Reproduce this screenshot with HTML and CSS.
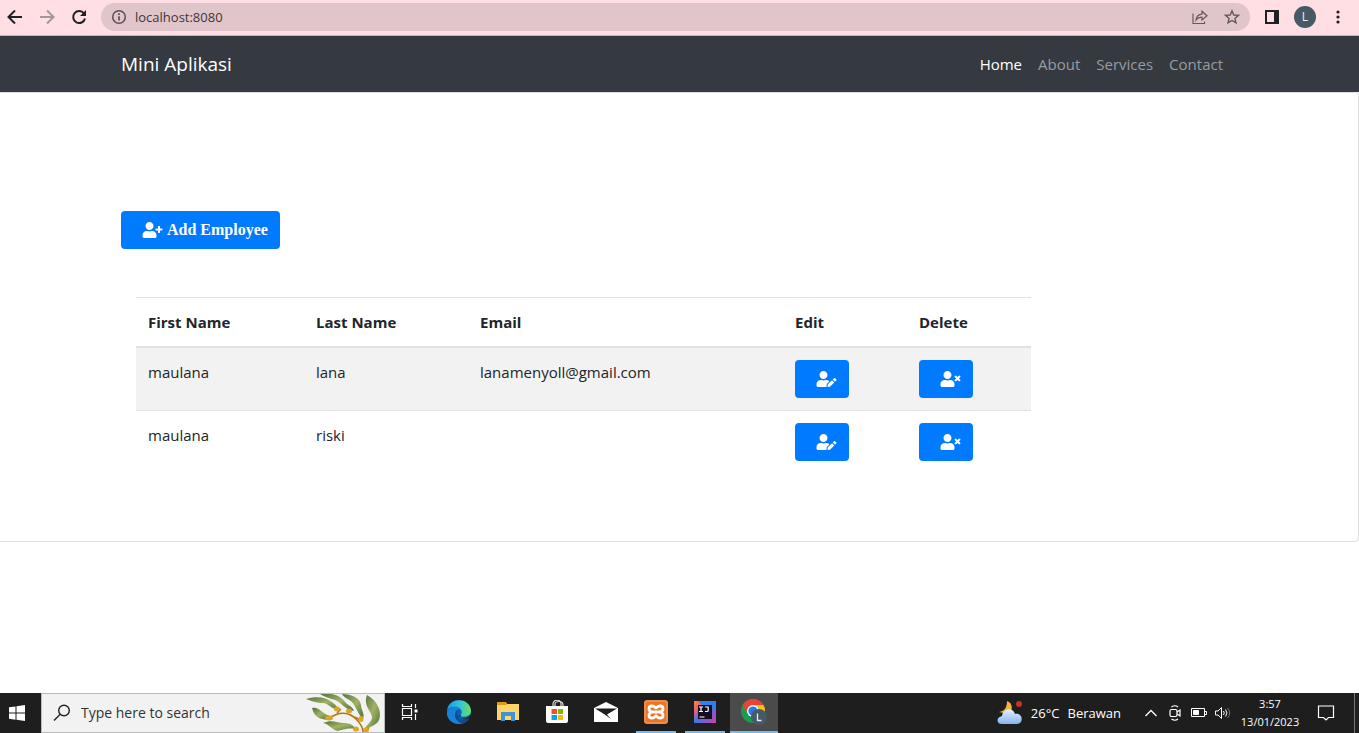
FILE: index.html
```html
<!DOCTYPE html>
<html lang="en">
<head>
<meta charset="utf-8">
<title>Mini Aplikasi</title>
<link rel="stylesheet" href="styles.css">
</head>
<body>
<svg class="defs" aria-hidden="true">
  <symbol id="user-plus" viewBox="0 0 640 512"><path d="M624 208h-64v-64c0-8.800-7.200-16-16-16h-32c-8.800 0-16 7.200-16 16v64h-64c-8.800 0-16 7.200-16 16v32c0 8.800 7.200 16 16 16h64v64c0 8.800 7.200 16 16 16h32c8.800 0 16-7.200 16-16v-64h64c8.800 0 16-7.200 16-16v-32c0-8.800-7.200-16-16-16zM224 256c70.700 0 128-57.300 128-128S294.700 0 224 0 96 57.300 96 128s57.300 128 128 128zm89.600 32h-16.700c-22.200 10.200-46.900 16-72.900 16s-50.600-5.800-72.900-16h-16.700C60.200 288 0 348.200 0 422.400V464c0 26.500 21.500 48 48 48h352c26.500 0 48-21.500 48-48v-41.600c0-74.200-60.200-134.400-134.400-134.400z"/></symbol>
  <symbol id="user-edit" viewBox="0 0 640 512"><path d="M224 256c70.700 0 128-57.300 128-128S294.700 0 224 0 96 57.300 96 128s57.300 128 128 128zm89.600 32h-16.700c-22.200 10.200-46.900 16-72.900 16s-50.600-5.800-72.900-16h-16.700C60.200 288 0 348.200 0 422.400V464c0 26.500 21.500 48 48 48h274.900c-2.400-6.800-3.400-14-2.600-21.300l6.800-60.900 1.200-11.100 7.900-7.900 77.300-77.300c-24.500-27.700-60-45.500-99.900-45.500zm45.300 145.300l-6.800 61c-1.100 10.200 7.500 18.800 17.600 17.600l60.900-6.800 137.900-137.900-71.700-71.700-137.900 137.800zM633 268.900L595.100 231c-9.300-9.300-24.500-9.300-33.800 0l-37.800 37.800-4.100 4.100 71.800 71.700 41.800-41.800c9.300-9.400 9.300-24.500 0-33.900z"/></symbol>
  <symbol id="user-times" viewBox="0 0 640 512"><path d="M589.600 240l45.600-45.600c6.300-6.300 6.300-16.500 0-22.800l-22.800-22.800c-6.300-6.300-16.500-6.300-22.800 0L544 194.400l-45.600-45.600c-6.300-6.300-16.500-6.300-22.800 0l-22.800 22.800c-6.300 6.300-6.300 16.500 0 22.800l45.600 45.600-45.600 45.600c-6.300 6.300-6.300 16.500 0 22.800l22.800 22.800c6.300 6.300 16.500 6.300 22.800 0l45.600-45.600 45.600 45.600c6.300 6.300 16.500 6.300 22.800 0l22.800-22.800c6.300-6.300 6.300-16.500 0-22.800zM224 256c70.700 0 128-57.300 128-128S294.700 0 224 0 96 57.300 96 128s57.300 128 128 128zm89.600 32h-16.700c-22.200 10.200-46.900 16-72.900 16s-50.600-5.800-72.900-16h-16.700C60.200 288 0 348.200 0 422.400V464c0 26.500 21.500 48 48 48h352c26.500 0 48-21.500 48-48v-41.600c0-74.200-60.200-134.400-134.400-134.400z"/></symbol>
  <linearGradient id="leaf" x1="0" y1="0" x2="1" y2="1"><stop offset="0" stop-color="#4f7340"/><stop offset=".5" stop-color="#a3b263"/><stop offset="1" stop-color="#4c7039"/></linearGradient>
  <linearGradient id="edge-top" x1="0" y1="0" x2="1" y2="0"><stop offset="0" stop-color="#1b9de2"/><stop offset=".5" stop-color="#2fc2df"/><stop offset="1" stop-color="#6be05a"/></linearGradient>
  <linearGradient id="cloud" x1="0" y1="0" x2="0" y2="1"><stop offset="0" stop-color="#e4f0ff"/><stop offset="1" stop-color="#86b4ef"/></linearGradient>
  <linearGradient id="idea" x1="0" y1="0" x2="1" y2="1"><stop offset="0" stop-color="#f88a3c"/><stop offset=".25" stop-color="#e8607a"/><stop offset=".5" stop-color="#3a76e8"/><stop offset="1" stop-color="#d93aa8"/></linearGradient>
</svg>

<header class="browser">
  <button class="tool" aria-label="Back"><svg width="16" height="16" viewBox="0 0 16 16" fill="none" stroke="#202124" stroke-width="2"><path d="M15 8H2M8 1.500L1.500 8 8 14.500"/></svg></button>
  <button class="tool" aria-label="Forward"><svg width="16" height="16" viewBox="0 0 16 16" fill="none" stroke="#a4969c" stroke-width="2"><path d="M1 8h13M8 1.500L14.500 8 8 14.500"/></svg></button>
  <button class="tool" aria-label="Reload"><svg width="16" height="16" viewBox="0 0 16 16"><path d="M13 4.500A6 6 0 1 0 14 9.500" fill="none" stroke="#202124" stroke-width="2"/><path d="M15 1v6H9z" fill="#202124"/></svg></button>
  <div class="address">
    <svg width="16" height="16" viewBox="0 0 16 16" fill="none" stroke="#5b5055"><circle cx="8" cy="8" r="6.300" stroke-width="1.500"/><path d="M8 7.300v4.200M8 4.300v1.700" stroke-width="1.700"/></svg>
    <input class="url" type="text" aria-label="Address" value="localhost:8080">
    <button class="tool" aria-label="Share"><svg width="16" height="16" viewBox="0 0 16 16" fill="none" stroke="#65595e" stroke-width="1.200"><path d="M1 4.500V14.500H12.500V12.500M4 11C4.500 7 7 5.300 10 5.200V2.200L15 6.800 10 11V8.200C7.500 8 5.500 9 4 11z"/></svg></button>
    <button class="tool" aria-label="Bookmark"><svg width="16" height="16" viewBox="0 0 16 16" fill="none" stroke="#65595e" stroke-width="1.400"><path d="M8 1.800l1.800 4.200 4.600.4-3.500 3 1.100 4.500L8 11.500l-4 2.400 1.100-4.500-3.500-3L6.200 6z"/></svg></button>
  </div>
  <button class="tool" aria-label="Side panel"><svg width="16" height="16" viewBox="0 0 16 16"><path d="M1 1h14v14H1zM3 3v10h7V3z" fill="#202124" fill-rule="evenodd"/></svg></button>
  <button class="avatar" aria-label="Profile">L</button>
  <button class="tool" aria-label="Menu"><svg width="16" height="16" viewBox="0 0 16 16" fill="#202124"><circle cx="8" cy="3" r="1.600"/><circle cx="8" cy="8" r="1.600"/><circle cx="8" cy="13" r="1.600"/></svg></button>
</header>

<nav class="navbar">
  <a class="brand" href="#">Mini Aplikasi</a>
  <a class="nav-link active" href="#">Home</a>
  <a class="nav-link" href="#">About</a>
  <a class="nav-link" href="#">Services</a>
  <a class="nav-link" href="#">Contact</a>
</nav>

<main class="page">
  <section class="card">
    <button class="btn"><svg class="user"><use href="#user-plus"/></svg><span class="btn-label">Add Employee</span></button>
    <table class="employees">
      <colgroup><col class="c-first"><col class="c-last"><col class="c-email"><col class="c-action"><col class="c-action"></colgroup>
      <thead><tr><th>First Name</th><th>Last Name</th><th>Email</th><th>Edit</th><th>Delete</th></tr></thead>
      <tbody>
        <tr><td>maulana</td><td>lana</td><td>lanamenyoll@gmail.com</td><td><button class="btn" aria-label="Edit"><svg class="user"><use href="#user-edit"/></svg></button></td><td><button class="btn" aria-label="Delete"><svg class="user"><use href="#user-times"/></svg></button></td></tr>
        <tr><td>maulana</td><td>riski</td><td></td><td><button class="btn" aria-label="Edit"><svg class="user"><use href="#user-edit"/></svg></button></td><td><button class="btn" aria-label="Delete"><svg class="user"><use href="#user-times"/></svg></button></td></tr>
      </tbody>
    </table>
  </section>
</main>

<footer class="taskbar">
  <button class="start" aria-label="Start"><svg width="16" height="16" viewBox="0 0 16 16" fill="#fff"><path d="M0 2.300L6.500 1.400V7.600H0zM7.500 1.200L16 0V7.600H7.500zM0 8.500H6.500V14.700L0 13.800zM7.500 8.500H16V16L7.500 14.800z"/></svg></button>
  <div class="search">
    <svg width="18" height="18" viewBox="0 0 18 18" fill="none" stroke="#222" stroke-width="1.400"><circle cx="11" cy="6.500" r="5.300"/><path d="M7.200 10.300L1 16.500"/></svg>
    <input class="query" type="text" aria-label="Search" placeholder="Type here to search">
    <svg width="76" height="38" viewBox="0 0 76 38"><g fill="url(#leaf)"><path d="M0 5C10 2 20 3 26 8C30 11 32 14 34 16C26 16 24 10 17 9C10 9 6 7 0 5z"/><path d="M14 0H25C33 1 37 5 40 9C43 12 46 12 48 17C39 16 35 8 29 6C23 4 19 3 14 0z"/><path d="M36 0C46 0 54 4 55 11C55 16 59 19 57 25C52 20 50 13 46 8C43 5 38 4 36 0z"/><path d="M61 1C72 7 76 18 73 26C71 31 64 33 58 36C60 31 66 28 66 23C65 16 57 12 61 1z"/><path d="M6 14C13 12 15 19 24 22L23 26C15 25 9 25 6 14z"/><path d="M17 29C26 25 31 29 38 29C44 29 47 31 50 35C42 34 40 35 32 37C26 36 23 30 17 29z"/></g><path d="M22 25C33 17 43 18 50 25C55 30 57 34 57 38M57 38C59 35 60 36 63 34M45 21C50 25 52 23 54 27M31 19L35 15" fill="none" stroke="#b37a13" stroke-width="1.600"/><g fill="#dca52a"><ellipse cx="23" cy="24" rx="4" ry="2.500"/><ellipse cx="31" cy="15" rx="3" ry="2.500"/><ellipse cx="43" cy="17" rx="3" ry="2.500"/><ellipse cx="55" cy="25" rx="2.500" ry="3"/><ellipse cx="50" cy="35" rx="3" ry="2.500"/><ellipse cx="60" cy="36" rx="3" ry="2.500"/></g></svg>
  </div>
  <button class="app" aria-label="Task view"><svg width="18" height="18" viewBox="0 0 18 18" fill="none" stroke="#fff" stroke-width="1.200"><path d="M1.500 5.500h9v7h-9zM1.500 1v2.500h9V1M1.500 17v-2.500h9V17M14.500 1v4M14.500 11v6"/><path d="M13.500 6.500h3v3h-3z" fill="#fff" stroke="none"/></svg></button>
  <button class="app" aria-label="Edge"><svg width="24" height="24" viewBox="0 0 24 24"><circle cx="12" cy="12" r="12" fill="#0c64b5"/><path d="M.2 10C2-3 22-3 24 10C25 17 15 18 13.700 15.500C13.500 14.500 15 14 14.800 12C14 6 4 5 .2 10z" fill="url(#edge-top)"/><path d="M0 12C2 6 12 6 13.500 9C9 9 7 14 9 18C10 22 14 23.500 16 23.300C7 26-1 19 0 12z" fill="#1584d8"/><path d="M12.500 9.500C9 11 10 18 14 19.500C17 20.700 20 19.500 22.500 18C20 23 15 24 12 22C6 18 7 10 12.500 9.500z" fill="#124b8d"/><path d="M13.700 15.500C12 16 13 18.500 17 18.500C19 18.500 21 17.500 24 15L24.500 20 22.500 18C19 20 13 20 12 15z" fill="#1e1e1e"/></svg></button>
  <button class="app" aria-label="Files"><svg width="24" height="20" viewBox="0 0 24 20"><path d="M1 0h9l2 3H1z" fill="#e29a12"/><path d="M1 3h9l1-1h12v16H1z" fill="#ffd567"/><path d="M5 10h14v9h-4v-5H9v5H5z" fill="#3b94dc"/></svg></button>
  <button class="app" aria-label="Store"><svg width="24" height="24" viewBox="0 0 24 24"><path d="M8 7V4C8-1 16-1 16 4V7M10 6V4C10 1 18 0 18 5V7" fill="none" stroke="#ddd" stroke-width="1.200"/><path d="M1 6h22v15q0 2-2 2H3q-2 0-2-2z" fill="#fff"/><path d="M6.500 9H12v5H6.500z" fill="#f25022"/><path d="M13 9h5v5h-5z" fill="#7fba00"/><path d="M6.500 15H12v5H6.500z" fill="#00a4ef"/><path d="M13 15h5v5h-5z" fill="#ffb900"/></svg></button>
  <button class="app" aria-label="Mail"><svg width="24" height="20" viewBox="0 0 24 20"><path d="M0 6L12 0l12 6v14H0z" fill="#fff"/><path d="M1 6.500H23L13 12.500l4 4.500L10 12z" fill="#1e1e1e"/></svg></button>
  <button class="app open" aria-label="XAMPP"><svg width="24" height="24" viewBox="0 0 24 24"><rect width="24" height="24" rx="3" fill="#e9772b"/><rect x="1" y="1" width="22" height="22" rx="2" fill="none" stroke="#f4a367"/><path d="M8 12C4 11 4 6 8 6C11 6 11 8 12 8S13 6 16 6C20 6 20 11 16 12C20 13 20 18 16 18C13 18 13 16 12 16S11 18 8 18C4 18 4 13 8 12zM8 12h8" fill="none" stroke="#fff" stroke-width="2.800"/></svg></button>
  <button class="app open" aria-label="IntelliJ IDEA"><svg width="22" height="22" viewBox="0 0 22 22"><path d="M0 0h22v22H0z" fill="url(#idea)"/><path d="M4 0h18v10L18 5H9z" fill="#2f80ee"/><path d="M4 4h14v14H4z" fill="#160e20"/><path d="M5 6h4M7 6v4.500M5 10.500h4M11 6h3.200v3.500q0 1-1.200 1h-2M5.500 16h5" fill="none" stroke="#fff" stroke-width="1.200"/></svg></button>
  <button class="app open current" aria-label="Chrome"><svg width="26" height="26" viewBox="0 0 26 26"><circle cx="12" cy="12" r="12" fill="#1e9b50"/><path d="M1.600 6A12 12 0 0 1 22.400 6H12A6 6 0 0 0 6.800 15z" fill="#e94335"/><path d="M22.400 6A12 12 0 0 1 12 24L17.200 15A6 6 0 0 0 12 6z" fill="#fbc116"/><circle cx="12" cy="12" r="6" fill="#fff"/><circle cx="12" cy="12" r="4.600" fill="#2979e8"/><circle cx="18" cy="18" r="8" fill="#455a64"/><path d="M16.500 14.500v7h4" fill="none" stroke="#eee" stroke-width="1.300"/></svg></button>
  <div class="tray">
    <button class="weather"><svg width="26" height="26" viewBox="0 0 26 26"><path d="M10 1C16 3 16 10 12 14L2 12C8 11 10 7 10 1z" fill="#f5b33d"/><path d="M5 24C-1 24-1 17 5 16C6 8 16 7 18 14C26 12 27 24 20 24z" fill="url(#cloud)"/><circle cx="22" cy="4" r="3" fill="#cb3226"/></svg><span>26°C</span><span>Berawan</span></button>
    <button class="tray-icon" aria-label="Hidden icons"><svg width="14" height="14" viewBox="0 0 14 14" fill="none" stroke="#fff" stroke-width="1.300"><path d="M1.500 10L7 4.500 12.500 10"/></svg></button>
    <button class="tray-icon" aria-label="Meet now"><svg width="14" height="16" viewBox="0 0 14 16" fill="none" stroke="#fff" stroke-width="1.200"><rect x="2" y="4.500" width="7" height="7" rx="1.500"/><path d="M9 7l3-2v6L9 9M3.500 2Q7-.5 10 2M3.500 14Q7 16.500 10 14"/></svg></button>
    <button class="tray-icon" aria-label="Battery"><svg width="16" height="12" viewBox="0 0 16 12" fill="none" stroke="#fff"><path d="M.5 1.500h13v8H.5zM14 4.500h1.500v3H14"/><path d="M2.500 3.500h5v4h-5z" fill="#fff"/></svg></button>
    <button class="tray-icon" aria-label="Volume"><svg width="16" height="14" viewBox="0 0 16 14" fill="none" stroke="#fff"><path d="M.5 5H3l3.500-3.500v11L3 9H.5zM8.500 5q1.500 2 0 4M10.500 3.500q3 3.500 0 7"/><path d="M12.500 2q4.500 5 0 10" stroke="#777"/></svg></button>
    <button class="clock"><span>3:57</span><span>13/01/2023</span></button>
    <button class="tray-icon" aria-label="Notifications"><svg width="18" height="18" viewBox="0 0 18 18" fill="none" stroke="#fff" stroke-width="1.200"><path d="M1.500 2h15v11.500h-5L9 16l-2.500-2.500h-5z"/></svg></button>
  </div>
</footer>
</body>
</html>
```
FILE: styles.css
```css
* { box-sizing: border-box; }

body {
  margin: 0;
  min-height: 100vh;
  display: flex;
  flex-direction: column;
  background: #fff;
  color: #212529;
  font: 15px/24px "Open Sans", sans-serif;
}

button, input { font: inherit; color: inherit; border: 0; padding: 0; background: none; }
svg { display: block; flex: none; }
.defs { position: absolute; width: 0; height: 0; }

/* Browser toolbar */
.browser {
  display: flex;
  align-items: center;
  gap: 16px;
  height: 36px;
  padding: 0 13px 2px 7px;
  background: #ffdee4;
  border-bottom: 1px solid #c6b4bb;
}
.address {
  flex: 1;
  display: flex;
  align-items: center;
  gap: 16px;
  height: 28px;
  margin-left: -2px;
  margin-right: -2px;
  padding: 0 10px;
  border-radius: 14px;
  background: #e0c5ca;
}
.url {
  flex: 1;
  min-width: 0;
  margin-left: -8px;
  color: #3f373a;
  font-size: 13px;
}
.avatar {
  width: 22px;
  height: 22px;
  margin: 0 -2px;
  border-radius: 50%;
  background: #455a64;
  color: #e8eef0;
  font-size: 12px;
  line-height: 22px;
}

/* Site navigation */
.navbar {
  display: flex;
  align-items: center;
  height: 56px;
  padding: 0 128px 0 121px;
  background: #343a40;
}
.navbar a { text-decoration: none; }
.brand { margin-right: auto; color: #fff; font-size: 19px; }
.nav-link { padding: 8px; color: #999c9f; }
.nav-link.active { color: #fff; }

/* Employee list */
.page { flex: 1; }
.card {
  padding: 118px 121px 68px;
  border: 1px solid #dfdfdf;
  border-left: 0;
  border-radius: 0 4px 4px 0;
}
.btn {
  display: flex;
  align-items: center;
  gap: 4px;
  height: 38px;
  padding: 0 12px 0 21px;
  border-radius: 4px;
  background: #007bff;
  color: #fff;
}
.btn-label { font: bold 16px/24px "Liberation Serif", serif; }
.user { width: 21px; height: 16px; fill: #fff; }

.employees {
  width: 895px;
  margin: 48px 0 0 15px;
  border-collapse: collapse;
  table-layout: fixed;
}
.c-first { width: 168px; }
.c-last { width: 164px; }
.c-action { width: 124px; }
.employees th, .employees td {
  padding: 12px;
  text-align: left;
  vertical-align: top;
  border-top: 1px solid #dee2e6;
}
.employees th { border-bottom: 2px solid #dee2e6; font-weight: 700; }
.employees tbody tr:nth-child(odd) { background: #f2f2f2; }

/* Taskbar */
.taskbar {
  display: flex;
  height: 40px;
  background: #1e1e1e;
  color: #fff;
}
.taskbar button { display: flex; align-items: center; justify-content: center; }
.start { width: 41px; padding-right: 8px; }
.search {
  display: flex;
  align-items: center;
  width: 344px;
  padding: 0 2px 0 11px;
  border: 1px solid #bbb;
  background: #f2f2f2;
}
.query { flex: 1; min-width: 0; margin-left: 10px; color: #333; font-size: 14px; }
.query::placeholder { color: #333; opacity: 1; }
.app { width: 49px; border-bottom: 2px solid transparent; }
.taskbar .open { width: 40px; margin: 0 3px 0 6px; border-bottom: 2px solid #76b9ed; }
.taskbar .current { width: 48px; margin: 0 0 0 2px; background: #4b4b4b; }
.tray { display: flex; margin-left: auto; padding-right: 7px; border-right: 1px solid #777; margin-right: 4px; }
.weather { gap: 8px; padding-right: 18px; font-size: 13px; }
.tray-icon { width: 24px; }
.clock { flex-direction: column; width: 70px; font-size: 11px; line-height: 18px; }
.clock + .tray-icon { width: 42px; }
```
